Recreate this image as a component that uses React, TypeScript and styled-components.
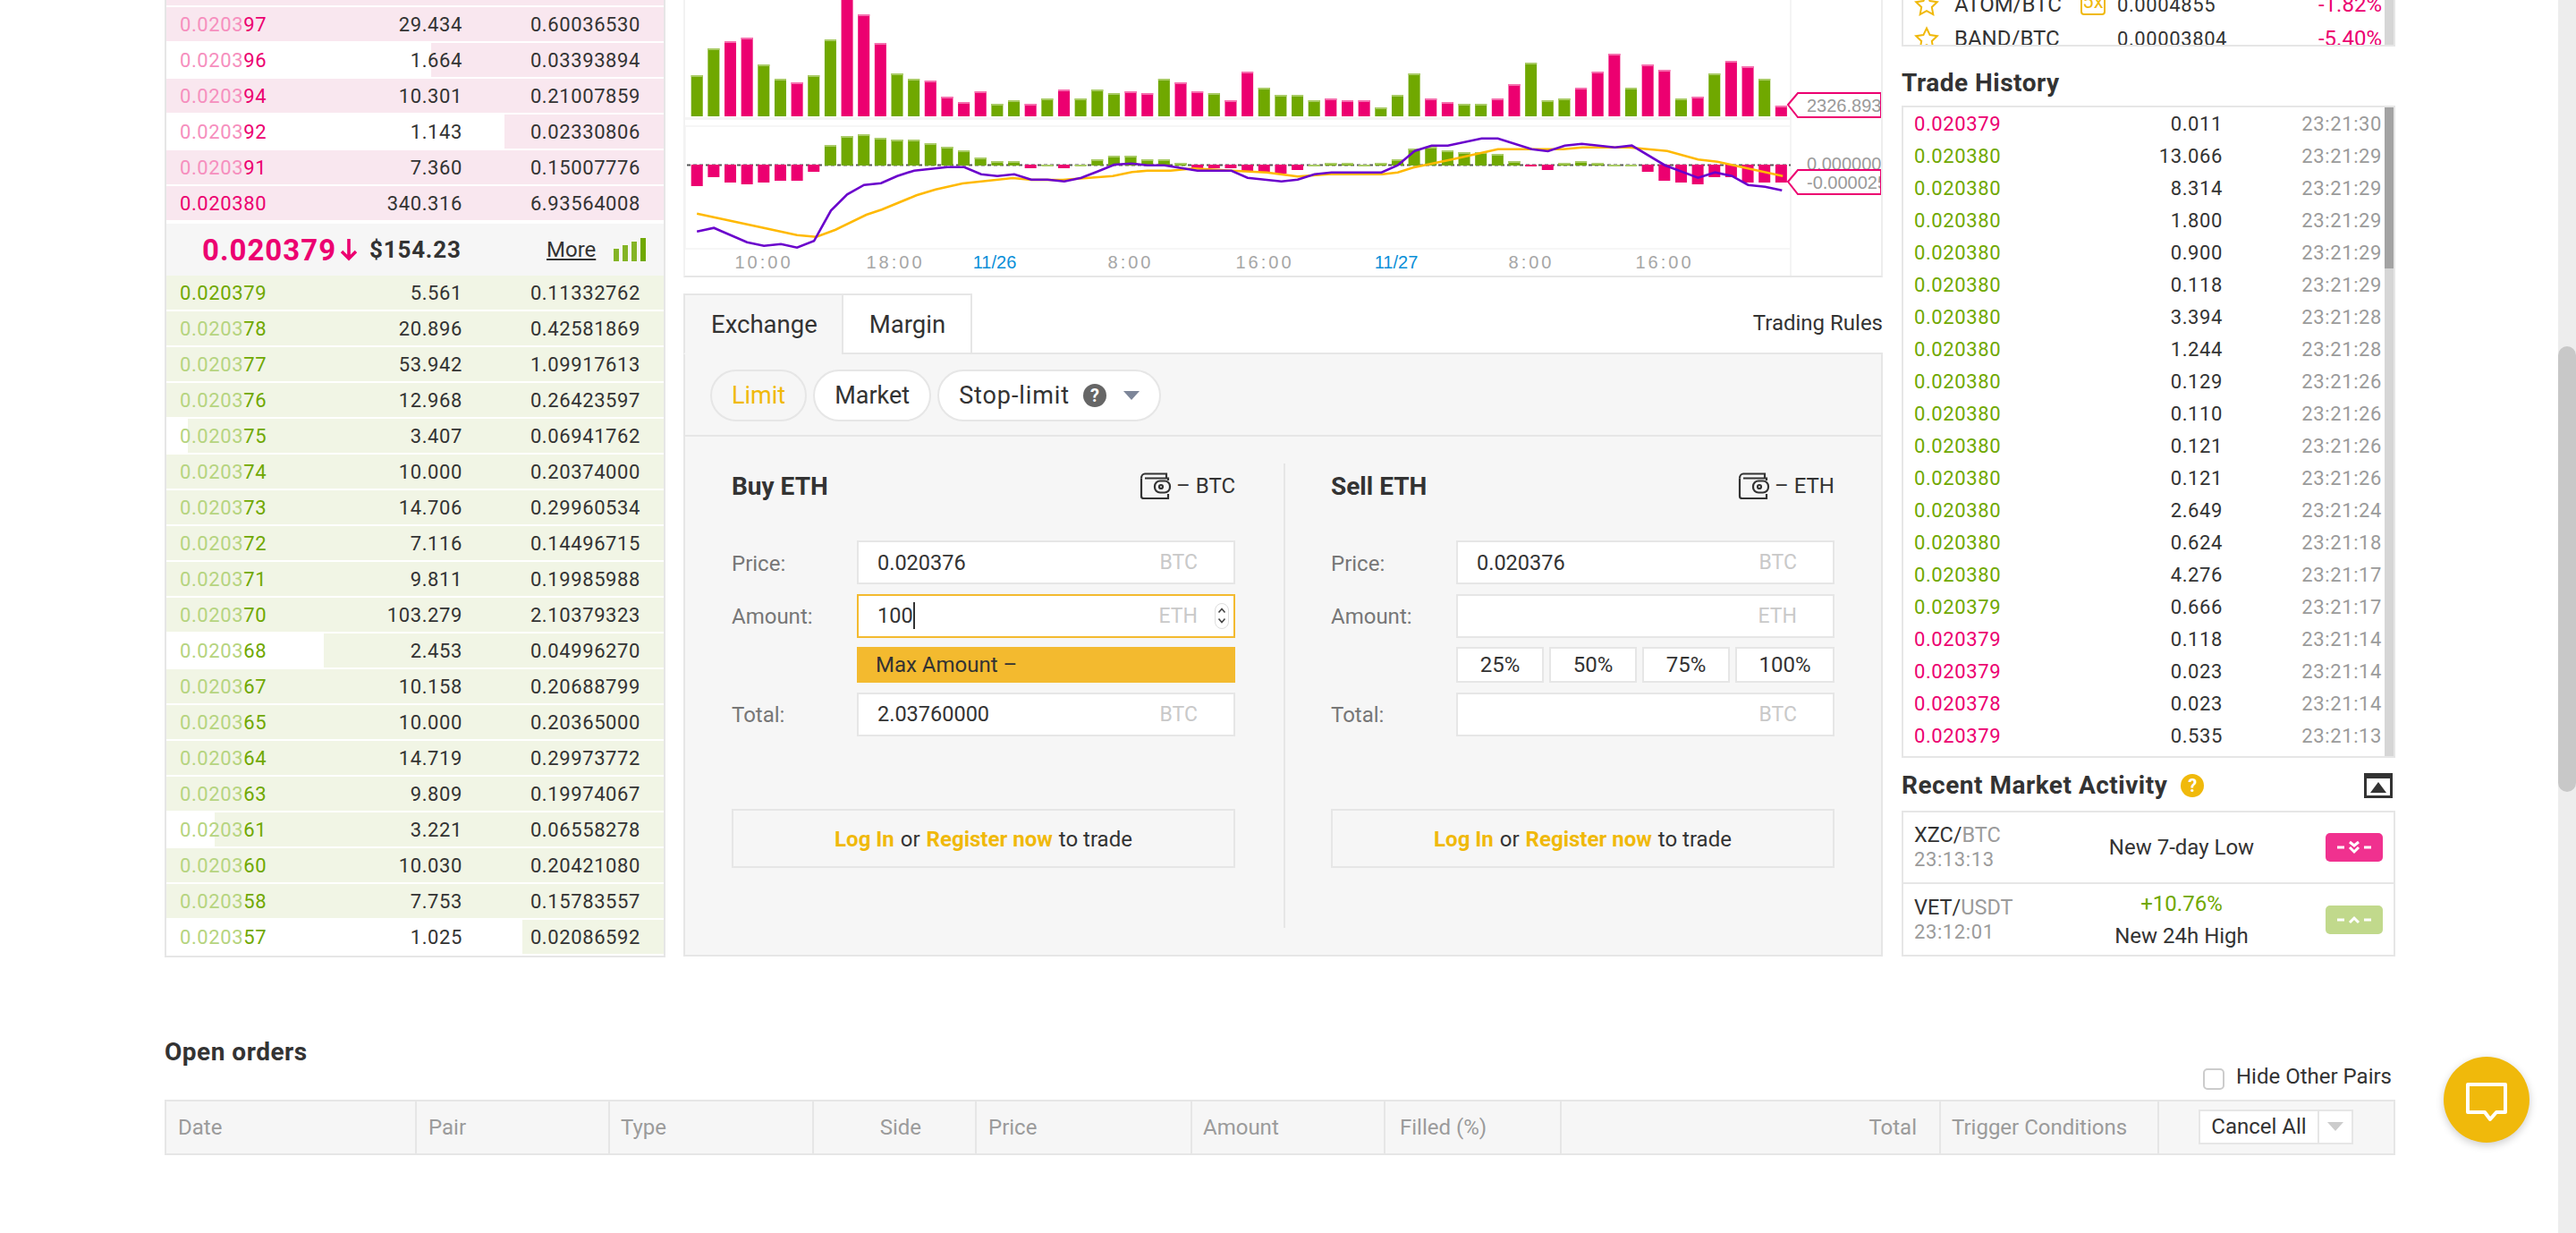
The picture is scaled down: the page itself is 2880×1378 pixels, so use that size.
import React from "react";
import styled, { createGlobalStyle } from "styled-components";

const PINK = "#ec0070";
const GREEN = "#70a800";
const BORDER = "#e6e6e6";
const YELLOW = "#f0b90b";

const asks = [
  { light: "", dark: "", amount: "", total: "", from: 0 },
  { light: "0.0203", dark: "97", amount: "29.434", total: "0.60036530", from: 0 },
  { light: "0.0203", dark: "96", amount: "1.664", total: "0.03393894", from: 296 },
  { light: "0.0203", dark: "94", amount: "10.301", total: "0.21007859", from: 0 },
  { light: "0.0203", dark: "92", amount: "1.143", total: "0.02330806", from: 378 },
  { light: "0.0203", dark: "91", amount: "7.360", total: "0.15007776", from: 0 },
  { light: "", dark: "0.020380", amount: "340.316", total: "6.93564008", from: 0 },
];

const bids = [
  { light: "", dark: "0.020379", amount: "5.561", total: "0.11332762", from: 0 },
  { light: "0.0203", dark: "78", amount: "20.896", total: "0.42581869", from: 0 },
  { light: "0.0203", dark: "77", amount: "53.942", total: "1.09917613", from: 0 },
  { light: "0.0203", dark: "76", amount: "12.968", total: "0.26423597", from: 0 },
  { light: "0.0203", dark: "75", amount: "3.407", total: "0.06941762", from: 24 },
  { light: "0.0203", dark: "74", amount: "10.000", total: "0.20374000", from: 0 },
  { light: "0.0203", dark: "73", amount: "14.706", total: "0.29960534", from: 0 },
  { light: "0.0203", dark: "72", amount: "7.116", total: "0.14496715", from: 0 },
  { light: "0.0203", dark: "71", amount: "9.811", total: "0.19985988", from: 0 },
  { light: "0.0203", dark: "70", amount: "103.279", total: "2.10379323", from: 0 },
  { light: "0.0203", dark: "68", amount: "2.453", total: "0.04996270", from: 176 },
  { light: "0.0203", dark: "67", amount: "10.158", total: "0.20688799", from: 0 },
  { light: "0.0203", dark: "65", amount: "10.000", total: "0.20365000", from: 0 },
  { light: "0.0203", dark: "64", amount: "14.719", total: "0.29973772", from: 0 },
  { light: "0.0203", dark: "63", amount: "9.809", total: "0.19974067", from: 0 },
  { light: "0.0203", dark: "61", amount: "3.221", total: "0.06558278", from: 54 },
  { light: "0.0203", dark: "60", amount: "10.030", total: "0.20421080", from: 0 },
  { light: "0.0203", dark: "58", amount: "7.753", total: "0.15783557", from: 0 },
  { light: "0.0203", dark: "57", amount: "1.025", total: "0.02086592", from: 398 },
];

const trades = [
  ["0.020379", "0.011", "23:21:30", "r"],
  ["0.020380", "13.066", "23:21:29", "g"],
  ["0.020380", "8.314", "23:21:29", "g"],
  ["0.020380", "1.800", "23:21:29", "g"],
  ["0.020380", "0.900", "23:21:29", "g"],
  ["0.020380", "0.118", "23:21:29", "g"],
  ["0.020380", "3.394", "23:21:28", "g"],
  ["0.020380", "1.244", "23:21:28", "g"],
  ["0.020380", "0.129", "23:21:26", "g"],
  ["0.020380", "0.110", "23:21:26", "g"],
  ["0.020380", "0.121", "23:21:26", "g"],
  ["0.020380", "0.121", "23:21:26", "g"],
  ["0.020380", "2.649", "23:21:24", "g"],
  ["0.020380", "0.624", "23:21:18", "g"],
  ["0.020380", "4.276", "23:21:17", "g"],
  ["0.020379", "0.666", "23:21:17", "g"],
  ["0.020379", "0.118", "23:21:14", "r"],
  ["0.020379", "0.023", "23:21:14", "r"],
  ["0.020378", "0.023", "23:21:14", "r"],
  ["0.020379", "0.535", "23:21:13", "r"],
];

// chart data, read off the picture: top of bar and colour
const volume: [number, string][] = [
  [252, "g"], [162, "g"], [138, "r"], [126, "r"], [216, "g"], [264, "g"], [276, "r"], [252, "g"], [132, "g"], [-6, "r"], [48, "r"],
  [144, "r"], [246, "g"], [264, "g"], [270, "r"], [324, "r"], [342, "r"], [306, "r"], [348, "g"], [336, "g"], [348, "r"], [330, "g"],
  [300, "r"], [330, "g"], [300, "g"], [312, "g"], [306, "r"], [312, "r"], [264, "g"], [276, "r"], [306, "r"], [312, "g"], [336, "r"],
  [240, "r"], [294, "g"], [318, "g"], [318, "g"], [336, "g"], [330, "r"], [336, "r"], [336, "r"], [360, "g"], [318, "g"], [246, "g"],
  [330, "r"], [342, "r"], [348, "g"], [348, "g"], [330, "r"], [282, "r"], [210, "g"], [336, "g"], [330, "g"], [294, "r"], [240, "r"],
  [180, "r"], [294, "g"], [216, "r"], [234, "r"], [330, "g"], [324, "r"], [246, "g"], [204, "r"], [222, "r"], [264, "g"], [354, "r"],
];

const macd: number[] = [
  624, 594, 612, 618, 612, 606, 606, 576, 486, 456, 450, 462, 468, 468, 480, 492, 504, 528, 540, 540, 564, 552, 564, 552, 534, 522, 522, 534, 534, 546,
  564, 564, 564, 576, 576, 582, 570, 552, 546, 546, 552, 546, 534, 498, 492, 504, 510, 510, 516, 540, 558, 570, 546, 540, 546, 552, 552, 576, 606, 612,
  618, 594, 594, 612, 612, 612,
];

const signalLine = [
  [20, 716], [150, 788], [175, 794], [200, 770], [240, 720], [260, 703], [305, 655], [330, 635], [365, 615], [430, 597], [455, 603], [495, 603], [560, 590],
  [585, 577], [605, 572], [635, 572], [665, 565], [715, 572], [760, 578], [800, 592], [840, 584], [910, 584], [930, 578], [950, 562], [1000, 535], [1060, 500],
  [1105, 500], [1145, 500], [1170, 494], [1230, 494], [1280, 506], [1320, 535], [1345, 542], [1430, 590],
];

const difLine = [
  [20, 776], [42, 764], [85, 812], [107, 824], [129, 818], [150, 830], [172, 808], [194, 706], [215, 652], [237, 620], [259, 614], [280, 590], [302, 572],
  [345, 560], [367, 560], [389, 584], [410, 590], [432, 584], [454, 602], [475, 602], [497, 608], [519, 596], [540, 575], [562, 552], [584, 548], [605, 554],
  [627, 554], [670, 572], [714, 572], [735, 596], [779, 608], [800, 602], [822, 584], [844, 578], [909, 578], [930, 554], [952, 506], [974, 488], [995, 488],
  [1039, 464], [1060, 464], [1104, 500], [1125, 507], [1147, 488], [1169, 482], [1212, 494], [1234, 488], [1277, 554], [1320, 596], [1342, 578], [1364, 590],
  [1385, 620], [1407, 626], [1429, 638],
];

const axisLabels = [
  { x: 852, text: "10:00" },
  { x: 999, text: "18:00" },
  { x: 1110, text: "11/26", blue: true },
  { x: 1262, text: "8:00" },
  { x: 1412, text: "16:00" },
  { x: 1559, text: "11/27", blue: true },
  { x: 1710, text: "8:00" },
  { x: 1859, text: "16:00" },
];

const columns = [
  { label: "Date", width: 280, pad: 13 },
  { label: "Pair", width: 216, pad: 13 },
  { label: "Type", width: 228, pad: 12 },
  { label: "Side", width: 182, pad: 60, right: true },
  { label: "Price", width: 241, pad: 13 },
  { label: "Amount", width: 216, pad: 12 },
  { label: "Filled (%)", width: 197, pad: 16 },
  { label: "Total", width: 424, pad: 25, right: true },
  { label: "Trigger Conditions", width: 244, pad: 12 },
];

const sx = (z: number) => z / 1.1615 - 4;
const sy = (z: number) => z / 3;
const linePoints = (pts: number[][]) => pts.map(([x, y]) => `${sx(x).toFixed(1)},${sy(y).toFixed(1)}`).join(" ");

const Chart = () => (
  <ChartBox>
    <svg width="1339" height="308" viewBox="0 0 1339 308">
      <rect x="0" y="131" width="1236" height="3" fill="#f5f5f5" />
      <rect x="0" y="141" width="1236" height="137" fill="none" stroke="#f6f6f6" strokeWidth="2" />
      <line x1="1236" y1="0" x2="1236" y2="308" stroke="#f4f4f4" strokeWidth="2" />
      {volume.map(([top, c], i) => {
        const x = sx(20 + 21.66 * i) - 6.5;
        const y = sy(top);
        return (
          <g key={i}>
            <rect x={x} y={y} width="13" height={130 - y} fill={c === "g" ? GREEN : PINK} />
            <rect x={x} y={y} width="13" height="2" fill={c === "g" ? "#a9cb66" : "#f56fae"} />
          </g>
        );
      })}
      <line x1="2" y1="184.5" x2="1236" y2="184.5" stroke="#555" strokeWidth="2" strokeDasharray="4 3" />
      {macd.map((v, i) => {
        const x = sx(20 + 21.66 * i) - 6.5;
        const y = sy(v);
        if (y > 184) {
          return <rect key={i} x={x} y="184" width="13" height={y - 184} fill={PINK} />;
        }
        return (
          <g key={i}>
            <rect x={x} y={y} width="13" height={185 - y} fill={GREEN} />
            <rect x={x} y={y} width="13" height="2" fill="#a9cb66" />
          </g>
        );
      })}
      <polyline points={linePoints(signalLine)} fill="none" stroke="#ffb900" strokeWidth="2.6" />
      <polyline points={linePoints(difLine)} fill="none" stroke="#6a00cc" strokeWidth="2.6" />
      <text x="1254" y="190" fontFamily="Liberation Sans" fontSize="20" fill="#9a9a9a">0.000000</text>
      <polygon points="1233,117 1244,104 1337,104 1337,131 1244,131" fill="#fff" stroke={PINK} strokeWidth="2" />
      <polygon points="1233,203 1244,190 1337,190 1337,217 1244,217" fill="#fff" stroke={PINK} strokeWidth="2" />
      <svg x="1254" y="104" width="82" height="27">
        <text x="0" y="21" fontFamily="Liberation Sans" fontSize="20" fill="#9a9a9a">2326.8930</text>
      </svg>
      <svg x="1254" y="190" width="82" height="27">
        <text x="0" y="21" fontFamily="Liberation Sans" fontSize="20" fill="#9a9a9a">-0.000025</text>
      </svg>
      {axisLabels.map((l) => (
        <text
          key={l.x + l.text}
          x={l.x - 764}
          y="300"
          textAnchor="middle"
          fontFamily="Liberation Sans"
          fontSize="20"
          letterSpacing={l.blue ? 0 : 3}
          fill={l.blue ? "#0a8fd8" : "#a6a6a6"}
        >
          {l.text}
        </text>
      ))}
    </svg>
  </ChartBox>
);

const Wallet = () => (
  <svg width="36" height="30" viewBox="0 0 36 30" fill="none" stroke="#333" strokeWidth="2.2">
    <path d="M2 6.5C2 3.5 4 1.5 6 1.5H30V6" />
    <path d="M2 6.5V26.5C2 28 3 29 4.5 29H32V24M32 9V6.5H6" />
    <rect x="17" y="9.5" width="17" height="13" rx="6" />
    <circle cx="24" cy="16" r="2" />
  </svg>
);

const Star = () => (
  <svg width="28" height="28" viewBox="0 0 28 28" fill="none" stroke={YELLOW} strokeWidth="2">
    <path d="M14 2.5l3.6 7.6 8.2 1.1-6 5.7 1.5 8.2-7.3-4-7.3 4 1.5-8.2-6-5.7 8.2-1.1z" />
  </svg>
);

const BookRow = ({ row, side }: { row: (typeof asks)[number]; side: "ask" | "bid" }) => (
  <Row $from={row.from} $side={side}>
    <Price $side={side}>
      {row.light && <Light $side={side}>{row.light}</Light>}
      {row.dark}
    </Price>
    <Num>{row.amount}</Num>
    <Num>{row.total}</Num>
  </Row>
);

const TradeForm = ({ side }: { side: "buy" | "sell" }) => {
  const buy = side === "buy";
  return (
    <FormCol>
      <FormHead>
        <FormTitle>{buy ? "Buy ETH" : "Sell ETH"}</FormTitle>
        <Balance>
          <Wallet /> – {buy ? "BTC" : "ETH"}
        </Balance>
      </FormHead>
      <Fields>
        <FieldLabel>Price:</FieldLabel>
        <Input>
          0.020376<Unit>BTC</Unit>
        </Input>
        <FieldLabel>Amount:</FieldLabel>
        <Input $focus={buy}>
          {buy && (
            <>
              100<Caret />
            </>
          )}
          <Unit>ETH</Unit>
          {buy && (
            <Spinner>
              <svg width="12" height="24" viewBox="0 0 12 24" fill="none" stroke="#444" strokeWidth="1.6">
                <path d="M2.5 8.5L6 4.5l3.5 4M2.5 15.5l3.5 4 3.5-4" />
              </svg>
            </Spinner>
          )}
        </Input>
        <span />
        {buy ? (
          <MaxBar>Max Amount –</MaxBar>
        ) : (
          <Percents>
            <Percent>25%</Percent>
            <Percent>50%</Percent>
            <Percent>75%</Percent>
            <Percent>100%</Percent>
          </Percents>
        )}
        <FieldLabel>Total:</FieldLabel>
        <Input>
          {buy && "2.03760000"}
          <Unit>BTC</Unit>
        </Input>
      </Fields>
      <LoginBar>
        <b>Log In</b> or <b>Register now</b> to trade
      </LoginBar>
    </FormCol>
  );
};

export default function App() {
  return (
    <Page>
      <GlobalStyle />
      <Top>
        <Book>
          {asks.map((r, i) => (
            <BookRow key={i} row={r} side="ask" />
          ))}
          <Mid>
            <BigPrice>0.020379</BigPrice>
            <svg width="18" height="25" viewBox="0 0 18 25" fill="none" stroke={PINK} strokeWidth="3.6">
              <path d="M9 0v22M1 14l8 8 8-8" />
            </svg>
            <Usd>$154.23</Usd>
            <More>More</More>
            <svg width="36" height="26" viewBox="0 0 36 26" fill={GREEN}>
              <rect x="0" y="12" width="6" height="14" opacity="0.85" />
              <rect x="10" y="8" width="6" height="18" opacity="0.85" />
              <rect x="20" y="4" width="6" height="22" opacity="0.85" />
              <rect x="30" y="0" width="6" height="26" />
            </svg>
          </Mid>
          {bids.map((r) => (
            <BookRow key={r.total} row={r} side="bid" />
          ))}
        </Book>

        <Center>
          <Chart />
          <TabStrip>
            <Tab $active>Exchange</Tab>
            <Tab>Margin</Tab>
            <Rules>Trading Rules</Rules>
          </TabStrip>
          <FormPanel>
            <Pills>
              <Pill $active>Limit</Pill>
              <Pill>Market</Pill>
              <Pill>
                <StopText>Stop-limit</StopText>
                <HelpDot $bg="#666">?</HelpDot>
                <Triangle />
              </Pill>
            </Pills>
            <Forms>
              <TradeForm side="buy" />
              <FormDivider />
              <TradeForm side="sell" />
            </Forms>
          </FormPanel>
        </Center>

        <Side>
          <Markets>
            <MarketList>
              <MarketRow>
                <Star />
                <MarketName>ATOM/BTC</MarketName>
                <Lever>5x</Lever>
                <Num $left>0.0004855</Num>
                <Change>-1.82%</Change>
              </MarketRow>
              <MarketRow>
                <Star />
                <MarketName>BAND/BTC</MarketName>
                <span />
                <Num $left>0.00003804</Num>
                <Change>-5.40%</Change>
              </MarketRow>
            </MarketList>
            <ScrollTrack />
          </Markets>
          <HistoryTitle>Trade History</HistoryTitle>
          <History>
            {trades.map((t, i) => (
              <TradeRow key={i}>
                <TradePrice $up={t[3] === "g"}>{t[0]}</TradePrice>
                <Num>{t[1]}</Num>
                <TradeTime>{t[2]}</TradeTime>
              </TradeRow>
            ))}
            <ScrollTrack>
              <ScrollThumb />
            </ScrollTrack>
          </History>
          <ActivityHead>
            <SectionTitle>Recent Market Activity</SectionTitle>
            <HelpDot $bg={YELLOW}>?</HelpDot>
            <Collapse>
              <svg width="18" height="12" viewBox="0 0 18 12" fill="#333">
                <path d="M9 0l9 12H0z" />
              </svg>
            </Collapse>
          </ActivityHead>
          <Activity>
            <ActivityRow>
              <div>
                <Pair>
                  XZC/<em>BTC</em>
                </Pair>
                <PairTime>23:13:13</PairTime>
              </div>
              <ActivityText>New 7-day Low</ActivityText>
              <Signal $bg="#f0318f">
                <svg width="38" height="18" viewBox="0 0 38 18" fill="none" stroke="#fff" strokeWidth="3">
                  <path d="M0 9h8M30 9h8M14 3l5 4 5-4M14 9l5 5 5-5" />
                </svg>
              </Signal>
            </ActivityRow>
            <ActivityRow>
              <div>
                <Pair>
                  VET/<em>USDT</em>
                </Pair>
                <PairTime>23:12:01</PairTime>
              </div>
              <ActivityText>
                <Gain>+10.76%</Gain>
                New 24h High
              </ActivityText>
              <Signal $bg="#c1d98c">
                <svg width="38" height="18" viewBox="0 0 38 18" fill="none" stroke="#fff" strokeWidth="3">
                  <path d="M0 9h8M30 9h8M14 12l5-5 5 5" />
                </svg>
              </Signal>
            </ActivityRow>
          </Activity>
        </Side>
      </Top>

      <Orders>
        <OrdersHead>
          <OrdersTitle>Open orders</OrdersTitle>
          <HideLabel>
            <CheckBox />
            Hide Other Pairs
          </HideLabel>
        </OrdersHead>
        <OrdersTable>
          {columns.map((c) => (
            <HeadCell key={c.label} $width={c.width} $pad={c.pad} $right={c.right}>
              {c.label}
            </HeadCell>
          ))}
          <ActionCell>
            <CancelAll>Cancel All</CancelAll>
            <CancelMenu>
              <Triangle $color="#ccc" />
            </CancelMenu>
          </ActionCell>
        </OrdersTable>
      </Orders>

      <ChatButton>
        <svg width="46" height="44" viewBox="0 0 46 44" fill="none" stroke="#fff" strokeWidth="4" strokeLinejoin="round">
          <path d="M2 2h42v31H34l-7 8-6-8H2z" />
        </svg>
      </ChatButton>
      <PageScroll>
        <PageThumb />
      </PageScroll>
    </Page>
  );
}

const GlobalStyle = createGlobalStyle`
  html, body {
    margin: 0;
    padding: 0;
    background: #fff;
    overflow: hidden;
  }
  * {
    box-sizing: border-box;
  }
`;

const Page = styled.div`
  width: 2880px;
  height: 1378px;
  overflow: hidden;
  padding-left: 184px;
  font-family: Roboto, "Liberation Sans", sans-serif;
  color: #333;
`;

const Top = styled.div`
  display: flex;
  width: 2494px;
  height: 1070px;
`;

const Book = styled.div`
  width: 560px;
  height: 1070px;
  flex: none;
  display: flex;
  flex-direction: column;
  justify-content: flex-end;
  overflow: hidden;
  border: 2px solid ${BORDER};
  border-top: 0;
`;

const Row = styled.div<{ $from: number; $side: string }>`
  flex: none;
  height: 38px;
  margin-bottom: 2px;
  padding: 0 24px 0 15px;
  display: grid;
  grid-template-columns: 200px 116px 199px;
  align-items: center;
  font-size: 22px;
  letter-spacing: 0.6px;
  background: linear-gradient(
    to right,
    #fff ${(p) => p.$from}px,
    ${(p) => (p.$side === "ask" ? "#f9e7ef" : "#f1f5e5")} ${(p) => p.$from}px
  );
`;

const Price = styled.div<{ $side: string }>`
  color: ${(p) => (p.$side === "ask" ? PINK : GREEN)};
`;

const Light = styled.span<{ $side: string }>`
  color: ${(p) => (p.$side === "ask" ? "#f68fbe" : "#b6d480")};
`;

const Num = styled.div<{ $left?: boolean }>`
  text-align: ${(p) => (p.$left ? "left" : "right")};
  color: #333;
  font-size: 22px;
  letter-spacing: 0.6px;
`;

const Mid = styled.div`
  flex: none;
  height: 58px;
  margin-top: 2px;
  background: #f6f6f6;
  display: flex;
  align-items: center;
  padding-left: 40px;
`;

const BigPrice = styled.div`
  width: 155px;
  font-size: 33px;
  font-weight: 700;
  letter-spacing: 1px;
  color: ${PINK};
`;

const Usd = styled.div`
  width: 198px;
  margin-left: 14px;
  font-size: 26px;
  font-weight: 700;
  letter-spacing: 0.8px;
`;

const More = styled.div`
  width: 75px;
  font-size: 24px;
  text-decoration: underline;
`;

const Center = styled.div`
  width: 1341px;
  height: 1069px;
  flex: none;
  margin: 0 21px 0 20px;
  display: flex;
  flex-direction: column;
`;

const ChartBox = styled.div`
  height: 310px;
  flex: none;
  border: 2px solid ${BORDER};
  border-top: 0;
  border-left-color: #f2f2f2;
  border-right-color: #ededed;
  overflow: hidden;
  svg {
    display: block;
  }
`;

const TabStrip = styled.div`
  margin-top: 18px;
  height: 68px;
  flex: none;
  display: flex;
  align-items: stretch;
  position: relative;
  z-index: 1;
`;

const Tab = styled.div<{ $active?: boolean }>`
  padding: ${(p) => (p.$active ? "0 29px" : "0 28px 0 29px")};
  margin-left: ${(p) => (p.$active ? 0 : "-2px")};
  display: flex;
  align-items: center;
  font-size: 27.5px;
  border: 2px solid ${BORDER};
  border-bottom-color: ${(p) => (p.$active ? "#f6f6f6" : BORDER)};
  background: ${(p) => (p.$active ? "#f6f6f6" : "#fff")};
  border-right: ${(p) => (p.$active ? "0" : undefined)};
`;

const Rules = styled.div`
  margin-left: auto;
  align-self: center;
  font-size: 24px;
  padding-bottom: 2px;
`;

const FormPanel = styled.div`
  flex: 1;
  margin-top: -2px;
  background: #f6f6f6;
  border: 2px solid ${BORDER};
  display: flex;
  flex-direction: column;
`;

const Pills = styled.div`
  display: flex;
  gap: 7px;
  padding: 17px 0 15px 28px;
  border-bottom: 2px solid ${BORDER};
`;

const Pill = styled.div<{ $active?: boolean }>`
  height: 58px;
  padding: 0 22px;
  border: 2px solid ${BORDER};
  border-radius: 29px;
  display: flex;
  align-items: center;
  font-size: 27px;
  color: ${(p) => (p.$active ? YELLOW : "#333")};
  background: ${(p) => (p.$active ? "transparent" : "#fff")};
`;

const StopText = styled.span`
  letter-spacing: 0.9px;
`;

const HelpDot = styled.span<{ $bg: string }>`
  width: 26px;
  height: 26px;
  margin-left: 15px;
  border-radius: 50%;
  background: ${(p) => p.$bg};
  color: #fff;
  font-size: 20px;
  font-weight: 700;
  display: flex;
  align-items: center;
  justify-content: center;
`;

const Triangle = styled.span<{ $color?: string }>`
  width: 0;
  height: 0;
  margin-left: 19px;
  border-left: 9px solid transparent;
  border-right: 9px solid transparent;
  border-top: 10px solid ${(p) => p.$color || "#7d8699"};
`;

const Forms = styled.div`
  flex: 1;
  display: flex;
  padding: 30px 52px 30px;
`;

const FormDivider = styled.div`
  width: 2px;
  margin: 0 51px 0 54px;
  background: ${BORDER};
`;

const FormCol = styled.div`
  width: 563px;
  flex: none;
`;

const FormHead = styled.div`
  height: 50px;
  margin-bottom: 36px;
  display: flex;
  align-items: center;
  justify-content: space-between;
`;

const FormTitle = styled.div`
  font-size: 28px;
  font-weight: 700;
`;

const Balance = styled.div`
  display: flex;
  align-items: center;
  gap: 5px;
  font-size: 24px;
`;

const Fields = styled.div`
  display: grid;
  grid-template-columns: 140px 423px;
  grid-template-rows: 49px 49px 40px 49px;
  row-gap: 10.5px;
  align-items: center;
`;

const FieldLabel = styled.div`
  padding-top: 2px;
  font-size: 24px;
  color: #777;
`;

const Input = styled.div<{ $focus?: boolean }>`
  height: 49px;
  position: relative;
  display: flex;
  align-items: center;
  padding-left: 21px;
  background: #fff;
  border: 2px solid ${(p) => (p.$focus ? "#f3ba2f" : BORDER)};
  font-size: 23.5px;
`;

const Caret = styled.span`
  width: 2px;
  height: 30px;
  background: #333;
`;

const Unit = styled.span`
  position: absolute;
  right: 40px;
  color: #c9c9c9;
  font-size: 23px;
`;

const Spinner = styled.span`
  position: absolute;
  right: 5px;
  top: 8px;
  width: 16px;
  height: 29px;
  border: 1px solid #ddd;
  border-radius: 8px;
  display: flex;
  align-items: center;
  justify-content: center;
`;

const MaxBar = styled.div`
  height: 40px;
  padding-left: 21px;
  display: flex;
  align-items: center;
  background: #f3ba2f;
  font-size: 24px;
`;

const Percents = styled.div`
  display: grid;
  grid-template-columns: 98px 98px 98px 111px;
  gap: 6px;
`;

const Percent = styled.div`
  height: 40px;
  display: flex;
  align-items: center;
  justify-content: center;
  background: #fff;
  border: 2px solid ${BORDER};
  font-size: 24px;
`;

const LoginBar = styled.div`
  height: 66px;
  margin-top: 81px;
  padding-top: 2px;
  border: 2px solid ${BORDER};
  display: flex;
  align-items: center;
  justify-content: center;
  gap: 7px;
  font-size: 24px;
  b {
    color: ${YELLOW};
    font-weight: 700;
  }
`;

const Side = styled.div`
  width: 552px;
  flex: none;
  display: flex;
  flex-direction: column;
`;

const Markets = styled.div`
  height: 52px;
  flex: none;
  position: relative;
  overflow: hidden;
  display: flex;
  flex-direction: column;
  justify-content: flex-end;
  border: 2px solid ${BORDER};
  border-top: 0;
`;

const MarketList = styled.div`
  margin-bottom: -12px;
`;

const MarketRow = styled.div`
  height: 38px;
  padding: 0 13px 0 12px;
  display: grid;
  grid-template-columns: 45px 141px 41px 180px 1fr;
  grid-template-rows: 38px;
  align-items: center;
`;

const MarketName = styled.div`
  font-size: 24px;
`;

const Lever = styled.div`
  width: 28px;
  height: 40px;
  align-self: start;
  margin-top: -9px;
  padding-top: 10px;
  border: 2px solid ${YELLOW};
  border-radius: 4px;
  color: ${YELLOW};
  font-size: 22px;
  text-align: center;
`;

const Change = styled.div`
  text-align: right;
  color: ${PINK};
  font-size: 24px;
`;

const ScrollTrack = styled.div`
  position: absolute;
  top: 0;
  right: 0;
  bottom: 0;
  width: 10px;
  background: #d6d6d6;
`;

const ScrollThumb = styled.div`
  height: 180px;
  background: #a3a3a3;
`;

const SectionTitle = styled.div`
  font-size: 28px;
  line-height: 40px;
  font-weight: 700;
  letter-spacing: 0.5px;
`;

const HistoryTitle = styled(SectionTitle)`
  flex: none;
  padding: 21px 0 5px;
  height: 66px;
`;

const History = styled.div`
  height: 729px;
  flex: none;
  position: relative;
  border: 2px solid ${BORDER};
`;

const TradeRow = styled.div`
  height: 36px;
  padding-left: 12px;
  display: grid;
  grid-template-columns: 200px 145px 178px;
  align-items: center;
`;

const TradePrice = styled.div<{ $up: boolean }>`
  color: ${(p) => (p.$up ? GREEN : PINK)};
  font-size: 22px;
  letter-spacing: 0.6px;
`;

const TradeTime = styled.div`
  text-align: right;
  color: #9b9b9b;
  font-size: 22px;
  letter-spacing: 0.6px;
`;

const ActivityHead = styled.div`
  flex: none;
  height: 59px;
  padding: 11px 3px 8px 0;
  display: flex;
  align-items: center;
`;

const Collapse = styled.div`
  margin-left: auto;
  width: 32px;
  height: 28px;
  border: 3px solid #333;
  border-top-width: 6px;
  display: flex;
  align-items: center;
  justify-content: center;
`;

const Activity = styled.div`
  flex: none;
  height: 163px;
  border: 2px solid ${BORDER};
`;

const ActivityRow = styled.div`
  height: 79px;
  padding: 0 12px;
  display: grid;
  grid-template-columns: 188px 222px 1fr;
  align-items: center;
  &:first-child {
    height: 80px;
    border-bottom: 2px solid ${BORDER};
  }
`;

const Pair = styled.div`
  font-size: 23.5px;
  line-height: 28px;
  em {
    font-style: normal;
    color: #9b9b9b;
  }
`;

const PairTime = styled.div`
  font-size: 22px;
  line-height: 28px;
  color: #9b9b9b;
  letter-spacing: 0.6px;
`;

const ActivityText = styled.div`
  text-align: center;
  font-size: 24px;
  line-height: 36px;
`;

const Gain = styled.div`
  color: ${GREEN};
`;

const Signal = styled.div<{ $bg: string }>`
  justify-self: end;
  width: 64px;
  height: 32px;
  border-radius: 5px;
  background: ${(p) => p.$bg};
  display: flex;
  align-items: center;
  justify-content: center;
`;

const Orders = styled.div`
  width: 2494px;
  padding-top: 86px;
`;

const OrdersHead = styled.div`
  height: 73px;
  display: flex;
  justify-content: space-between;
`;

const OrdersTitle = styled.div`
  font-size: 28px;
  line-height: 40px;
  font-weight: 700;
  letter-spacing: 0.5px;
`;

const HideLabel = styled.div`
  align-self: flex-end;
  margin-bottom: 11px;
  margin-right: 4px;
  display: flex;
  align-items: center;
  gap: 13px;
  font-size: 24px;
`;

const CheckBox = styled.span`
  width: 24px;
  height: 24px;
  margin-top: 7px;
  border: 2px solid #ccc;
  border-radius: 5px;
  background: #fff;
`;

const OrdersTable = styled.div`
  height: 62px;
  display: flex;
  background: #f6f6f6;
  border: 2px solid ${BORDER};
`;

const HeadCell = styled.div<{ $width: number; $pad: number; $right?: boolean }>`
  width: ${(p) => p.$width}px;
  flex: none;
  display: flex;
  align-items: center;
  justify-content: ${(p) => (p.$right ? "flex-end" : "flex-start")};
  padding-left: ${(p) => (p.$right ? 0 : p.$pad)}px;
  padding-right: ${(p) => (p.$right ? p.$pad : 0)}px;
  border-right: 2px solid ${BORDER};
  color: #9b9b9b;
  font-size: 24px;
`;

const ActionCell = styled.div`
  flex: 1;
  display: flex;
  align-items: center;
  padding-left: 44px;
  padding-bottom: 2px;
`;

const CancelAll = styled.div`
  width: 135px;
  height: 39px;
  display: flex;
  align-items: center;
  justify-content: center;
  background: #fff;
  border: 2px solid ${BORDER};
  font-size: 24px;
`;

const CancelMenu = styled.div`
  width: 40px;
  height: 39px;
  margin-left: -2px;
  display: flex;
  align-items: center;
  justify-content: center;
  background: #fff;
  border: 2px solid ${BORDER};
  span {
    margin-left: 0;
  }
`;

const ChatButton = styled.div`
  position: fixed;
  right: 52px;
  bottom: 101px;
  width: 96px;
  height: 96px;
  border-radius: 50%;
  background: ${YELLOW};
  box-shadow: 0 3px 10px rgba(0, 0, 0, 0.2);
  display: flex;
  align-items: center;
  justify-content: center;
  padding-top: 5px;
`;

const PageScroll = styled.div`
  position: fixed;
  top: 0;
  right: 0;
  bottom: 0;
  width: 20px;
  background: #ededed;
`;

const PageThumb = styled.div`
  width: 20px;
  height: 498px;
  margin-top: 387px;
  border-radius: 10px;
  background: #c8c8c8;
`;
